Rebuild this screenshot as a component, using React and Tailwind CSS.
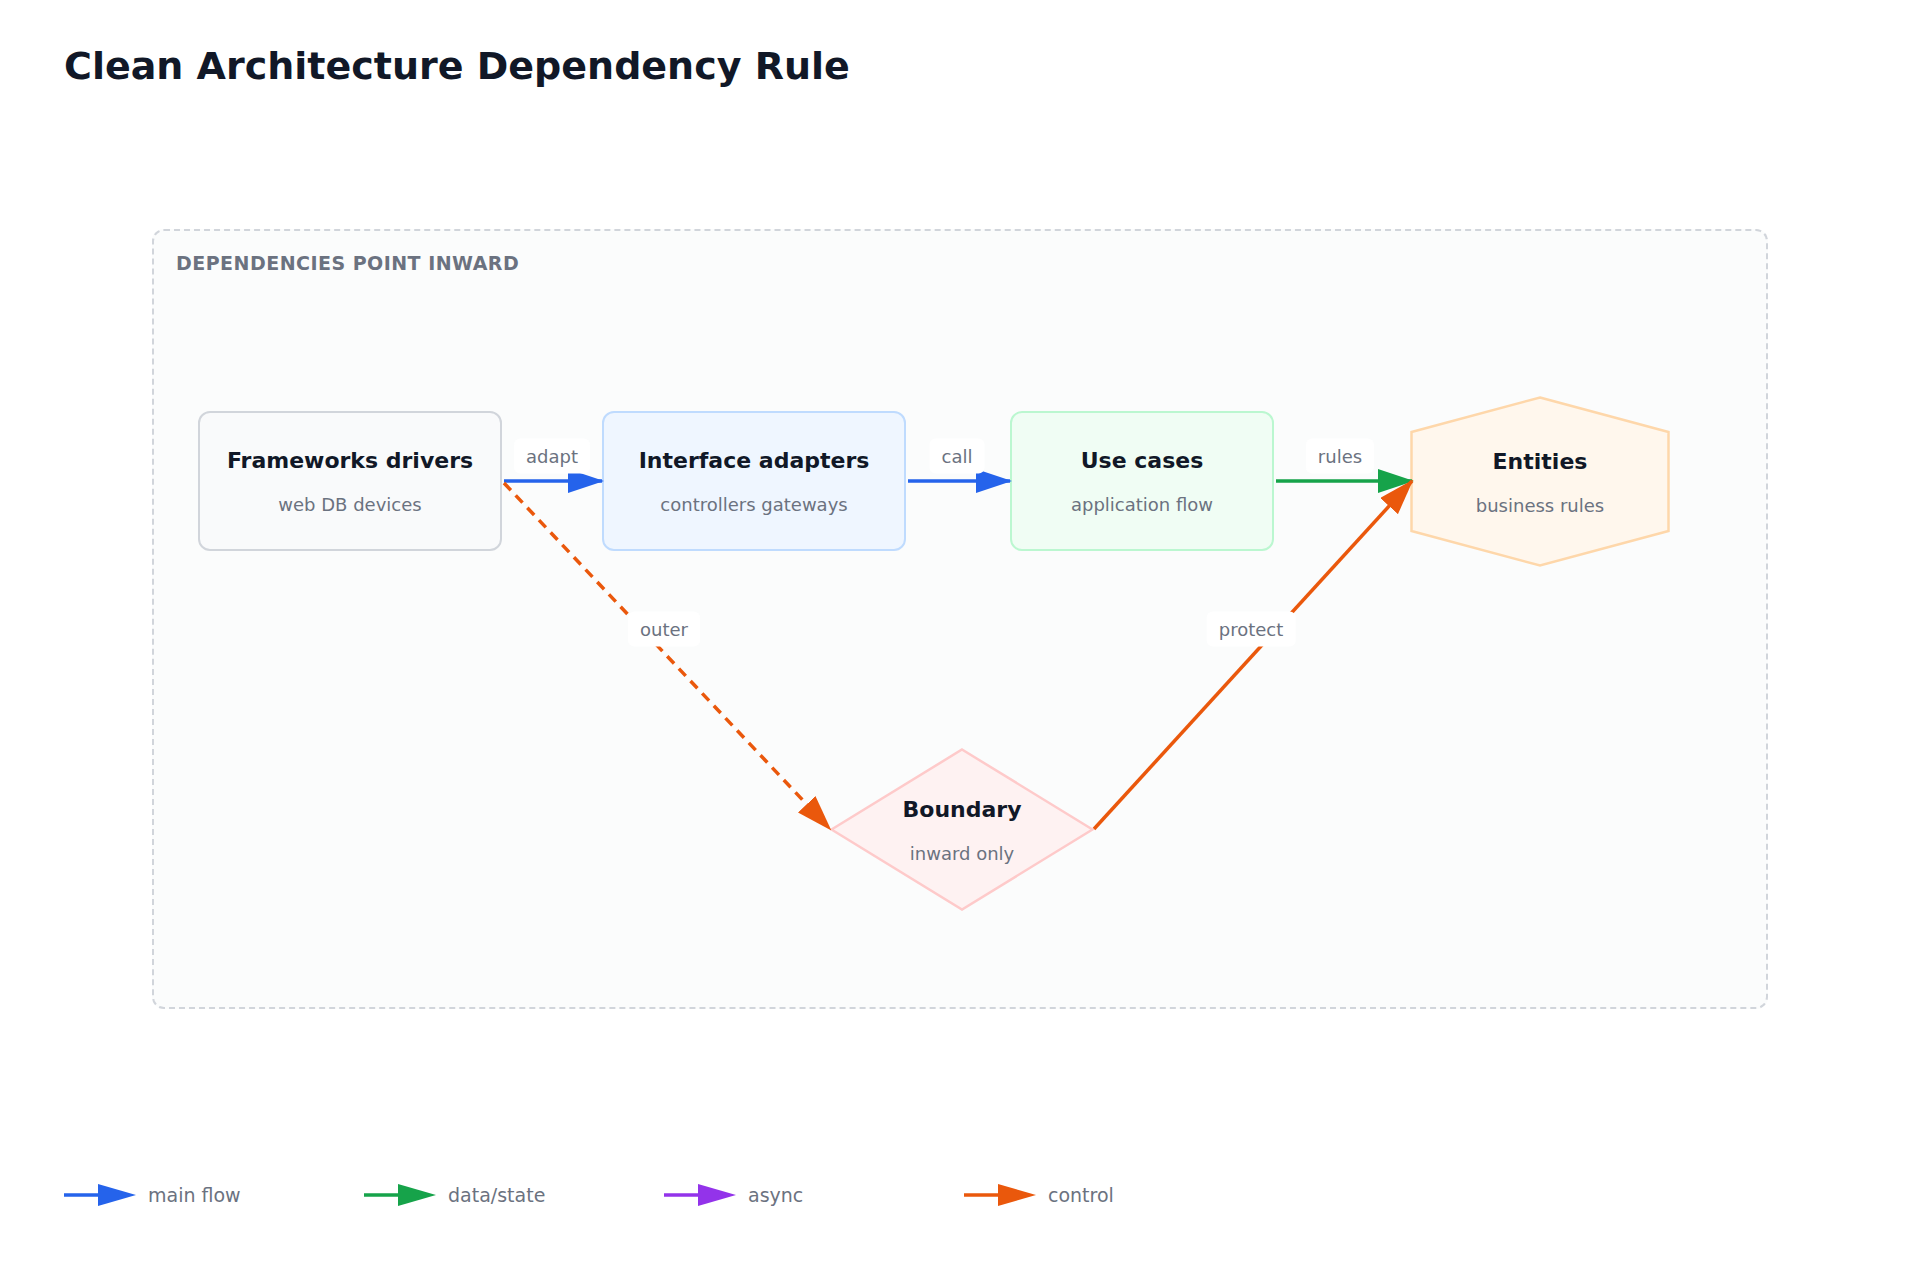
const FONT = { fontFamily: '"DejaVu Sans", "Noto Sans", sans-serif' };

const COLORS = { blue: '#2563eb', green: '#16a34a', purple: '#9333ea', orange: '#ea580c' };

const Box = ({ x, y, w, h, title, sub, cls }) => (
  <div
    className={`absolute flex flex-col items-center justify-center rounded-xl border-2 ${cls}`}
    style={{ left: x, top: y, width: w, height: h }}
  >
    <div className="text-[22px] font-bold text-[#111827] whitespace-nowrap">{title}</div>
    <div className="mt-[14px] text-[18px] text-[#6b7280] whitespace-nowrap">{sub}</div>
  </div>
);

const Shape = ({ x, y, w, h, points, fill, stroke, title, sub }) => (
  <div className="absolute" style={{ left: x, top: y, width: w, height: h }}>
    <svg className="absolute inset-0" width={w} height={h} viewBox={`0 0 ${w} ${h}`}>
      <polygon points={points} fill={fill} stroke={stroke} strokeWidth="2.5" />
    </svg>
    <div className="relative flex h-full flex-col items-center justify-center">
      <div className="text-[22px] font-bold text-[#111827]">{title}</div>
      <div className="mt-[14px] text-[18px] text-[#6b7280]">{sub}</div>
    </div>
  </div>
);

const EdgeLabel = ({ x, y, text }) => (
  <div
    className="absolute -translate-x-1/2 -translate-y-1/2 rounded-md bg-white px-3 py-1 text-[18px] text-[#6b7280]"
    style={{ left: x, top: y }}
  >
    {text}
  </div>
);

const LegendItem = ({ color, label }) => (
  <div className="flex w-[300px] items-center gap-3">
    <svg width="72" height="28" viewBox="0 0 72 28">
      <line x1="0" y1="14" x2="40" y2="14" stroke={color} strokeWidth="3.5" />
      <polygon points="34,3 72,14 34,25" fill={color} />
    </svg>
    <span className="text-[19px] text-[#6b7280]">{label}</span>
  </div>
);

export default function App() {
  const marker = (id, color) => (
    <marker id={id} markerUnits="userSpaceOnUse" markerWidth="36" markerHeight="24" refX="34" refY="12" orient="auto">
      <polygon points="0,0 36,12 0,24" fill={color} />
    </marker>
  );
  return (
    <div className="min-h-[1280px] w-[1920px] bg-white" style={FONT}>
      <h1 className="px-16 pt-[38px] text-[38px] font-bold text-[#111827]">Clean Architecture Dependency Rule</h1>

      <div className="ml-[152px] mt-[134px] relative h-[780px] w-[1616px] rounded-xl border-2 border-dashed border-[#d1d5db] bg-[#fbfcfc]">
        <div className="absolute left-[22px] top-[18px] text-[19px] font-bold tracking-wide text-[#6b7280]">
          DEPENDENCIES POINT INWARD
        </div>

        <Box x={44} y={180} w={304} h={140} title="Frameworks drivers" sub="web DB devices" cls="border-[#d1d5db] bg-[#f9fafb]" />
        <Box x={448} y={180} w={304} h={140} title="Interface adapters" sub="controllers gateways" cls="border-[#bfdbfe] bg-[#eff6ff]" />
        <Box x={856} y={180} w={264} h={140} title="Use cases" sub="application flow" cls="border-[#bbf7d0] bg-[#f0fdf4]" />
        <Shape x={1256} y={165} w={260} h={171} points="130,1.5 258.5,36 258.5,135 130,169.5 1.5,135 1.5,36" fill="#fff7ed" stroke="#fed7aa" title="Entities" sub="business rules" />
        <Shape x={676} y={517} w={264} h={163} points="132,1.5 262.5,81.5 132,161.5 1.5,81.5" fill="#fef2f2" stroke="#fecaca" title="Boundary" sub="inward only" />

        <svg className="pointer-events-none absolute inset-0" width="1616" height="780" viewBox="0 0 1616 780">
          <defs>
            {marker('mb', COLORS.blue)}
            {marker('mg', COLORS.green)}
            {marker('mo', COLORS.orange)}
          </defs>
          <line x1="350" y1="250" x2="448" y2="250" stroke={COLORS.blue} strokeWidth="3.5" markerEnd="url(#mb)" />
          <line x1="754" y1="250" x2="856" y2="250" stroke={COLORS.blue} strokeWidth="3.5" markerEnd="url(#mb)" />
          <line x1="1122" y1="250" x2="1258" y2="250" stroke={COLORS.green} strokeWidth="3.5" markerEnd="url(#mg)" />
          <line x1="350" y1="252" x2="676" y2="598" stroke={COLORS.orange} strokeWidth="3.5" strokeDasharray="10 7" markerEnd="url(#mo)" />
          <line x1="940" y1="598" x2="1258" y2="250" stroke={COLORS.orange} strokeWidth="3.5" markerEnd="url(#mo)" />
        </svg>

        <EdgeLabel x={398} y={225} text="adapt" />
        <EdgeLabel x={803} y={225} text="call" />
        <EdgeLabel x={1186} y={225} text="rules" />
        <EdgeLabel x={510} y={398} text="outer" />
        <EdgeLabel x={1097} y={398} text="protect" />
      </div>

      <div className="mt-[172px] flex px-16">
        <LegendItem color={COLORS.blue} label="main flow" />
        <LegendItem color={COLORS.green} label="data/state" />
        <LegendItem color={COLORS.purple} label="async" />
        <LegendItem color={COLORS.orange} label="control" />
      </div>
    </div>
  );
}
